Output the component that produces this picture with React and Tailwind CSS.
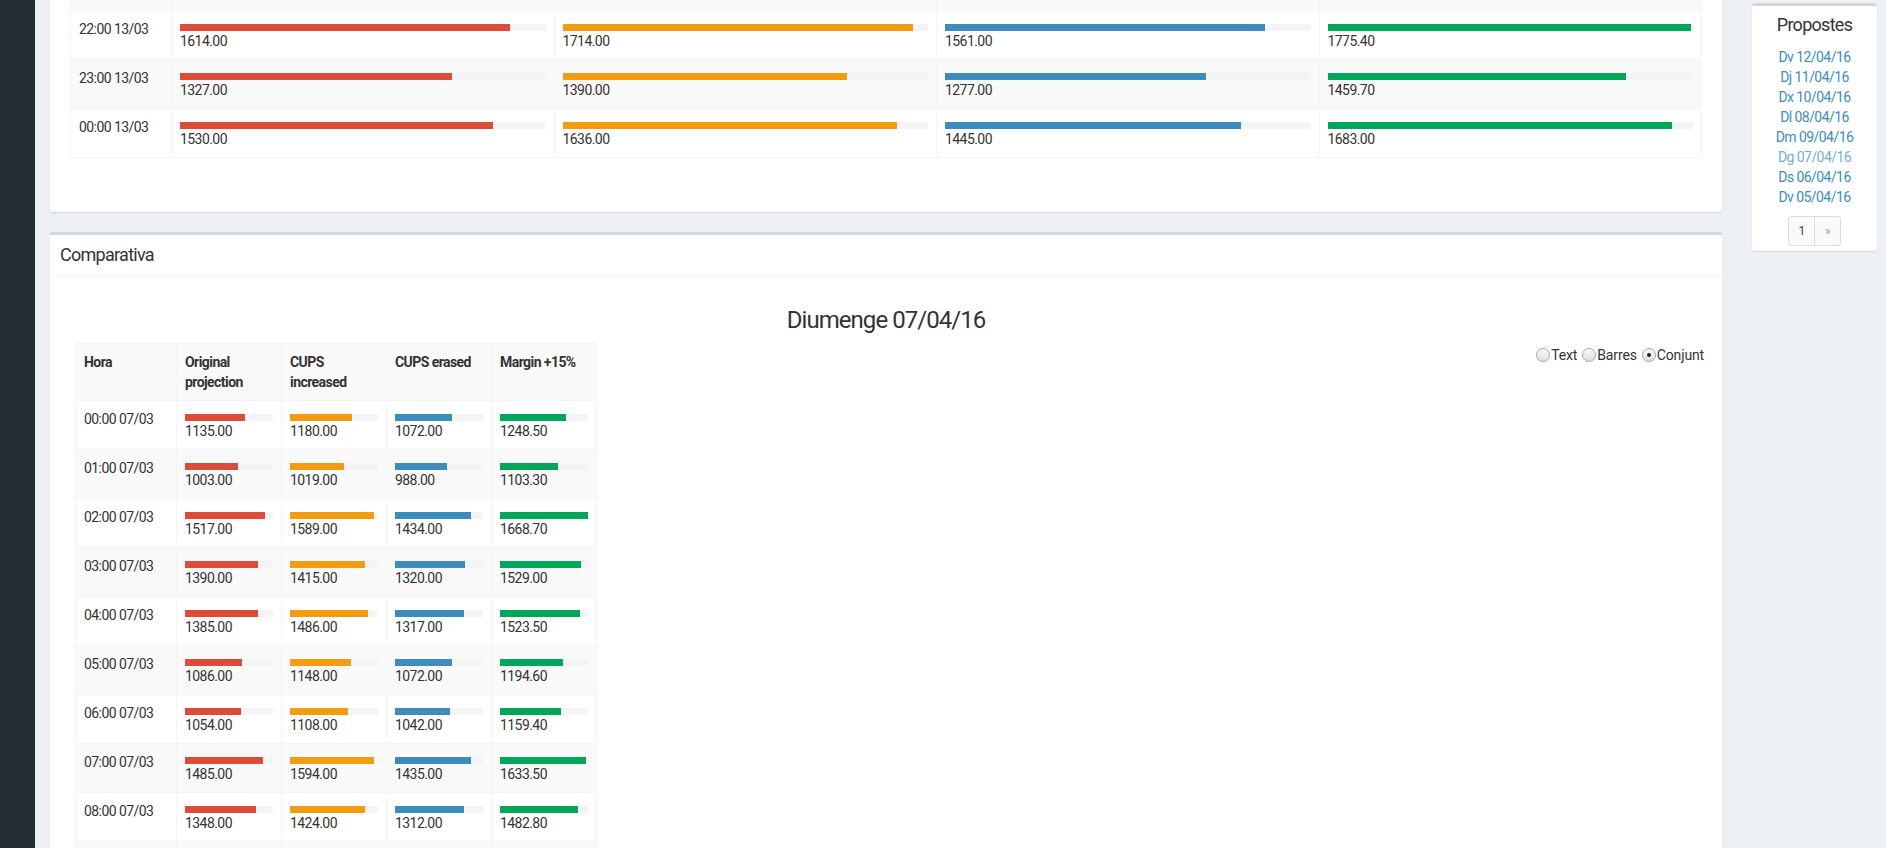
import React from 'react';

const TOP_MAX = 1785;
const BOTTOM_MAX = 1668.7;

const barColors = ['bg-[#dd4b39]', 'bg-[#f39c12]', 'bg-[#3c8dbc]', 'bg-[#00a65a]'];

// first row (21:00) is scrolled out of view, only its bottom edge shows
const topRows = [
  ['22:00 13/03', [1614, 1714, 1561, 1775.4]],
  ['23:00 13/03', [1327, 1390, 1277, 1459.7]],
  ['00:00 13/03', [1530, 1636, 1445, 1683]],
];

const bottomRows = [
  ['00:00 07/03', [1135, 1180, 1072, 1248.5]],
  ['01:00 07/03', [1003, 1019, 988, 1103.3]],
  ['02:00 07/03', [1517, 1589, 1434, 1668.7]],
  ['03:00 07/03', [1390, 1415, 1320, 1529]],
  ['04:00 07/03', [1385, 1486, 1317, 1523.5]],
  ['05:00 07/03', [1086, 1148, 1072, 1194.6]],
  ['06:00 07/03', [1054, 1108, 1042, 1159.4]],
  ['07:00 07/03', [1485, 1594, 1435, 1633.5]],
  ['08:00 07/03', [1348, 1424, 1312, 1482.8]],
];

const propostes = [
  ['Dv 12/04/16', false],
  ['Dj 11/04/16', false],
  ['Dx 10/04/16', false],
  ['Dl 08/04/16', false],
  ['Dm 09/04/16', false],
  ['Dg 07/04/16', true],
  ['Ds 06/04/16', false],
  ['Dv 05/04/16', false],
];

function BarCell({ value, max, i }) {
  return (
    <td className="border border-[#f4f4f4] p-[8px] align-top">
      <div className="mt-[5px] h-[7px] bg-[#f4f4f4]">
        <div className={`h-full ${barColors[i]}`} style={{ width: `${Math.min(100, (value / max) * 100)}%` }} />
      </div>
      <div className="leading-[20px]">{value.toFixed(2)}</div>
    </td>
  );
}

function EmptyRow({ striped }) {
  return (
    <tr className={`h-[49px] ${striped ? 'bg-[#f9f9f9]' : 'bg-white'}`}>
      <td className="border border-[#f4f4f4]" />
      <td className="border border-[#f4f4f4]" />
      <td className="border border-[#f4f4f4]" />
      <td className="border border-[#f4f4f4]" />
      <td className="border border-[#f4f4f4]" />
    </tr>
  );
}

function Radio({ label, checked }) {
  return (
    <label className="flex items-center">
      <span className="flex h-[14px] w-[14px] items-center justify-center rounded-full border border-[#a6a6a6] bg-gradient-to-b from-[#fdfdfd] to-[#dcdcdc]">
        {checked && <span className="h-[4px] w-[4px] rounded-full bg-[#222]" />}
      </span>
      <span className="ml-[1px] tracking-[-0.01em]">{label}</span>
    </label>
  );
}

export default function App() {
  return (
    <div className="flex h-[848px] w-full overflow-hidden bg-[#ecf0f5] font-[family-name:Roboto,sans-serif] text-[14px] leading-[20px] tracking-[-0.04em] text-[#333]">
      {/* sidebar */}
      <div className="w-[35px] shrink-0 bg-[#222d32]" />

      <div className="flex flex-1 gap-[30px] pl-[15px] pr-[9px]">
        {/* main column */}
        <div className="min-w-0 flex-1">
          {/* top box, scrolled partly out of view */}
          <div className="-mt-[39px] rounded-[3px] bg-white px-[20px] pb-[54px] shadow-[0_1px_1px_rgba(0,0,0,0.1)]">
            <table className="w-full table-fixed border-collapse">
              <colgroup>
                <col className="w-[101px]" />
                <col />
                <col />
                <col />
                <col />
              </colgroup>
              <tbody>
                <EmptyRow striped />
                {topRows.map(([hour, vals], r) => (
                  <tr key={hour} className={r % 2 === 1 ? 'bg-[#f9f9f9]' : 'bg-white'}>
                    <td className="border border-[#f4f4f4] p-[8px] align-top">{hour}</td>
                    {vals.map((v, i) => (
                      <BarCell key={i} value={v} max={TOP_MAX} i={i} />
                    ))}
                  </tr>
                ))}
              </tbody>
            </table>
          </div>

          {/* Comparativa */}
          <div className="mt-[20px] rounded-[3px] border-t-[3px] border-[#d2d6de] bg-white shadow-[0_1px_1px_rgba(0,0,0,0.1)]">
            <div className="border-b border-[#f4f4f4] px-[10px] pt-[10px] pb-[11px]">
              <h3 className="text-[18px] leading-[20px] tracking-[-0.04em]">Comparativa</h3>
            </div>
            <div className="p-[10px]">
              <h3 className="mt-[20px] mb-[10px] text-center text-[24px] leading-[26.4px] tracking-[-0.04em]">
                Diumenge 07/04/16
              </h3>
              <div className="flex items-start justify-between pl-[15px] pr-[8px]">
                <table className="w-[521px] table-fixed border-collapse">
                  <colgroup>
                    <col className="w-[101px]" />
                    <col className="w-[105px]" />
                    <col className="w-[105px]" />
                    <col className="w-[105px]" />
                    <col className="w-[105px]" />
                  </colgroup>
                  <tbody>
                    <tr className="bg-[#f9f9f9] font-bold">
                      <td className="border border-[#f4f4f4] p-[8px] align-top">Hora</td>
                      <td className="border border-[#f4f4f4] p-[8px] align-top">Original projection</td>
                      <td className="border border-[#f4f4f4] p-[8px] align-top">CUPS increased</td>
                      <td className="border border-[#f4f4f4] p-[8px] align-top">CUPS erased</td>
                      <td className="border border-[#f4f4f4] p-[8px] align-top">Margin +15%</td>
                    </tr>
                    {bottomRows.map(([hour, vals], r) => (
                      <tr key={hour} className={r % 2 === 0 ? 'bg-white' : 'bg-[#f9f9f9]'}>
                        <td className="border border-[#f4f4f4] p-[8px] align-top">{hour}</td>
                        {vals.map((v, i) => (
                          <BarCell key={i} value={v} max={BOTTOM_MAX} i={i} />
                        ))}
                      </tr>
                    ))}
                    <EmptyRow striped />
                  </tbody>
                </table>

                <div className="mt-[2px] flex items-center gap-[5px]">
                  <Radio label="Text" />
                  <Radio label="Barres" />
                  <Radio label="Conjunt" checked />
                </div>
              </div>
            </div>
          </div>
        </div>

        {/* Propostes */}
        <div className="w-[125px] shrink-0">
          <div className="mt-[3px] rounded-[3px] border-t-[3px] border-[#d2d6de] bg-white pt-[9px] pb-[5px] text-center shadow-[0_1px_1px_rgba(0,0,0,0.1)]">
            <h3 className="text-[18px] leading-[20px] tracking-[-0.04em]">Propostes</h3>
            <ul className="mt-[12px]">
              {propostes.map(([d, visited]) => (
                <li key={d}>
                  <a href="#" className={visited ? 'text-[#72afd2]' : 'text-[#3c8dbc]'}>
                    {d}
                  </a>
                </li>
              ))}
            </ul>
            <div className="mt-[9px] flex justify-center text-[12px] leading-[18px]">
              <span className="flex h-[30px] w-[27px] items-center justify-center rounded-l-[3px] border border-[#ddd] bg-[#fafafa] text-[#444]">
                1
              </span>
              <span className="-ml-px flex h-[30px] w-[27px] items-center justify-center rounded-r-[3px] border border-[#ddd] bg-[#fafafa] text-[#999]">
                »
              </span>
            </div>
          </div>
        </div>
      </div>
    </div>
  );
}
